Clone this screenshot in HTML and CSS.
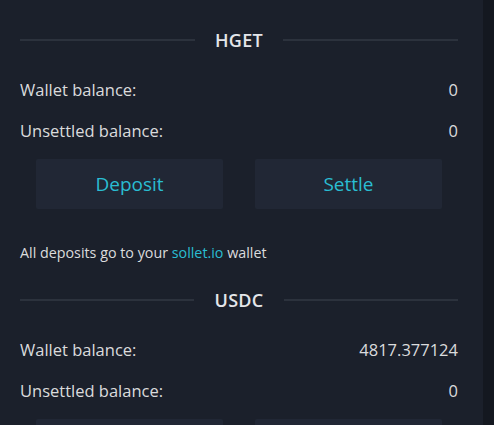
FILE: index.html
```html
<!DOCTYPE html>
<html>
<head>
<meta charset="utf-8">
<link rel="stylesheet" href="styles.css">
</head>
<body>
<div class="frame">
  <div class="panel">
    <section class="coin">
      <div class="divider"><span class="line"></span><span class="title">HGET</span><span class="line"></span></div>
      <div class="row"><span>Wallet balance:</span><span>0</span></div>
      <div class="row"><span>Unsettled balance:</span><span>0</span></div>
      <div class="actions"><button class="btn">Deposit</button><button class="btn">Settle</button></div>
      <p class="note">All deposits go to your <a class="link">sollet.io</a> wallet</p>
    </section>
    <section class="coin">
      <div class="divider"><span class="line"></span><span class="title">USDC</span><span class="line"></span></div>
      <div class="row"><span>Wallet balance:</span><span>4817.377124</span></div>
      <div class="row"><span>Unsettled balance:</span><span>0</span></div>
      <div class="actions"><button class="btn">Deposit</button><button class="btn">Settle</button></div>
      <p class="note">All deposits go to your <a class="link">sollet.io</a> wallet</p>
    </section>
  </div>
  <div class="track"></div>
</div>
</body>
</html>
```
FILE: styles.css
```css
html, body {
  margin: 0;
  padding: 0;
  height: 100%;
  overflow: hidden;
  background: #1b202b;
}
.frame {
  display: flex;
  height: 425px;
  overflow: hidden;
}
.panel {
  width: 438px;
  padding: 0 25px 0 20px;
  background: #1b202b;
  font-family: "Open Sans", "Noto Sans", sans-serif;
  color: rgba(255, 255, 255, 0.85);
  flex: none;
}
.track {
  flex: 1;
  background: #141820;
}
.coin:first-child .divider { margin-top: 28px; }
.divider {
  display: flex;
  align-items: center;
  height: 24px;
  margin-top: 25px;
}
.line {
  flex: 1;
  height: 2px;
  background: #2c323d;
}
.title {
  padding: 0 20px;
  font-size: 18px;
  font-weight: 600;
  letter-spacing: 0.3px;
  color: #e4e6ea;
}
.row {
  display: flex;
  justify-content: space-between;
  align-items: center;
  height: 41px;
  font-size: 16.5px;
}
.divider + .row { margin-top: 17px; }
.actions {
  display: flex;
  justify-content: center;
  gap: 32px;
  margin-top: 8px;
}
.btn {
  width: 187px;
  height: 50px;
  border: none;
  border-radius: 2px;
  background: #212735;
  color: #2abdd2;
  font-family: inherit;
  font-size: 19px;
  padding: 0;
}
.note {
  margin: 34px 0 0;
  line-height: 20px;
  font-size: 14.3px;
}
.link { color: #2abdd2; }
```
